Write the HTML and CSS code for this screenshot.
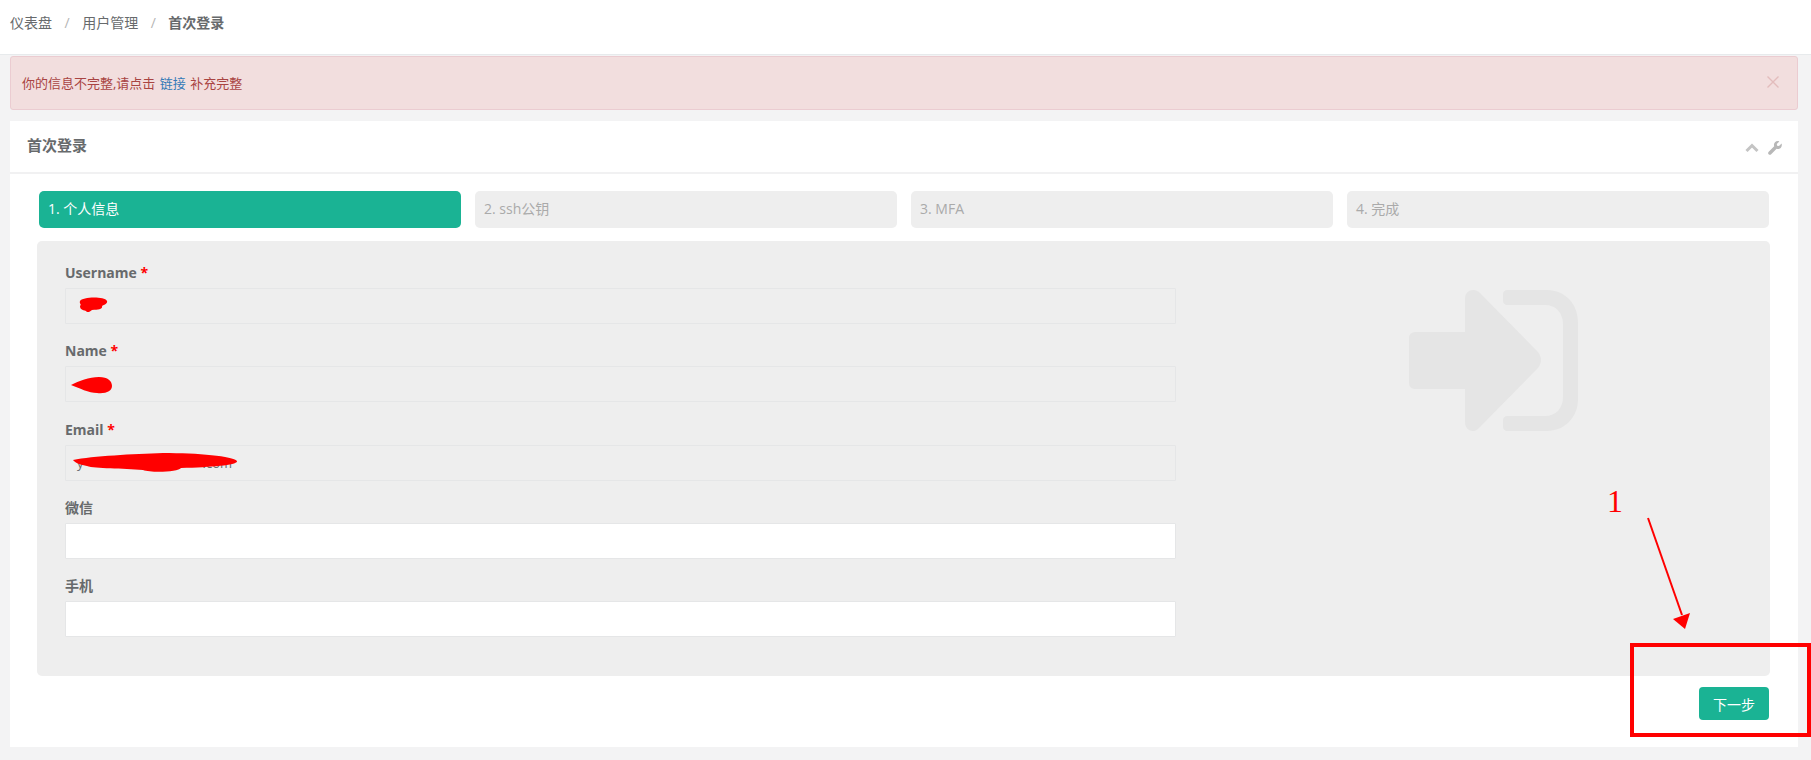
FILE: index.html
```html
<!DOCTYPE html>
<html lang="zh-CN">
<head>
<meta charset="utf-8">
<title>首次登录</title>
<link rel="stylesheet" href="styles.css">
</head>
<body>
<header class="topbar">
  <nav class="crumbs">
    <span>仪表盘</span><span class="sep">/</span><span>用户管理</span><span class="sep">/</span><strong>首次登录</strong>
  </nav>
</header>
<main class="page">
  <div class="alert">
    <span>你的信息不完整,请点击 <a class="alert-link" href="#">链接</a> 补充完整</span>
    <svg class="alert-close" viewBox="0 0 12 12" width="12" height="12"><path d="M0.5 0.5L11.5 11.5M11.5 0.5L0.5 11.5"/></svg>
  </div>
  <section class="card">
    <div class="card-title">
      <h5>首次登录</h5>
      <div class="card-tools">
        <svg class="tool" viewBox="0 0 14 10" width="14" height="10"><path d="M1.5 8L7 2.5L12.5 8"/></svg>
        <svg class="wrench" viewBox="0 0 14 14" width="14" height="14"><path d="M13.6 2.6L11 5.1L9.1 4.7L8.8 2.9L11.3 0.4C9.8-.2 8.1 0.1 7 1.2C5.900 2.300 5.700 3.900 6.200 5.200L0.700 10.700C-.1 11.500-.1 12.600 0.600 13.300C1.300 14 2.500 14 3.200 13.200L8.600 7.800C9.900 8.300 11.600 8 12.700 7C13.800 5.800 14.100 4.100 13.600 2.600Z"/></svg>
      </div>
    </div>
    <div class="card-body">
      <ol class="steps">
        <li class="step active">1. 个人信息</li>
        <li class="step">2. ssh公钥</li>
        <li class="step">3. MFA</li>
        <li class="step">4. 完成</li>
      </ol>
      <div class="panel">
        <form class="form">
          <div class="field">
            <label>Username <em>*</em></label>
            <div class="input disabled">
              <svg class="scribble s1" viewBox="0 0 30 16" width="30" height="16"><path d="M2 4C4 0 26-1 29 4C30 7 25 8 24 9C25 12 21 13 14 13C12 15 9 16 8 14C4 13 2 12 2 9C4 7 1 7 2 4Z"/></svg>
            </div>
          </div>
          <div class="field">
            <label>Name <em>*</em></label>
            <div class="input disabled">
              <svg class="scribble s2" viewBox="0 0 42 17" width="42" height="17"><path d="M0 8C8 4 18 0 28 0C37 0 41 4 41 9C41 14 35 17 26 16C18 16 8 11 0 8Z"/></svg>
            </div>
          </div>
          <div class="field">
            <label>Email <em>*</em></label>
            <div class="input disabled">
              <span class="email-value">y******@*********.com</span>
              <svg class="scribble s3" viewBox="0 0 164 20" width="164" height="20"><path d="M0 7C20 3 60 1 90 0C125 0 160 3 164 8C165 12 140 14 108 15C106 19 78 20 70 17C50 15 22 16 14 13C8 12 2 10 0 7Z"/></svg>
            </div>
          </div>
          <div class="field">
            <label>微信</label>
            <div class="input"></div>
          </div>
          <div class="field">
            <label>手机</label>
            <div class="input"></div>
          </div>
        </form>
        <div class="watermark">
          <svg viewBox="0 0 169 141" width="169" height="141">
            <path d="M0 48C0 44 3 42 7 42H56V9C56 3 60 0 64 0C67 0 69 1 71 3L129 62C133 67 133 73 129 78L71 137C69 139 67 141 64 141C60 141 56 138 56 132V99H7C3 99 0 97 0 93Z"/>
            <path d="M98 0H138C156 0 169 14 169 32V109C169 127 156 141 138 141H98C96 141 94 139 94 137V130C94 128 96 126 98 126H136C147 126 154 118 154 107V34C154 23 147 15 136 15H98C96 15 94 13 94 11V4C94 2 96 0 98 0Z"/>
          </svg>
        </div>
      </div>
      <div class="actions">
        <button class="btn" type="button">下一步</button>
      </div>
    </div>
  </section>
</main>
<svg class="annotation" viewBox="0 0 1811 760" width="1811" height="760">
  <text class="anno-num" x="1607" y="512">1</text>
  <path class="anno-line" d="M1648 518L1682 615"/>
  <path class="anno-head" d="M1673 619L1690 613L1685 629Z"/>
  <rect class="anno-box" x="1632" y="645" width="177" height="90"/>
</svg>
</body>
</html>
```
FILE: styles.css
```css
* {
  box-sizing: border-box;
}

html,
body {
  margin: 0;
  height: 760px;
  overflow: hidden;
}

body {
  position: relative;
  background: #f3f3f4;
  color: #676a6c;
  font-family: "Open Sans", "Noto Sans CJK SC", sans-serif;
  font-size: 14px;
}

.topbar {
  height: 55px;
  background: #fff;
  border-bottom: 1px solid #e7eaec;
  padding: 0 10px;
  display: flex;
  align-items: center;
}

.crumbs {
  display: flex;
  align-items: center;
  margin-top: -9px;
  line-height: 20px;
}

.crumbs strong {
  font-weight: 700;
}

.sep {
  color: #b5b5b5;
  margin: 0 12.5px;
}

.page {
  padding: 1px 13px 0 10px;
}

.alert {
  height: 54px;
  background: #f2dede;
  border: 1px solid #ebccd1;
  border-radius: 3px;
  color: #a94442;
  font-size: 13px;
  word-spacing: 1px;
  padding: 0 12px 2px 11px;
  display: flex;
  align-items: center;
  justify-content: space-between;
}

.alert-link {
  color: #337ab7;
  text-decoration: none;
}

.alert-close {
  fill: none;
  stroke: #e3bcbc;
  stroke-width: 1.4;
  margin-right: 6px;
  flex: none;
}

.card {
  margin-top: 11px;
  background: #fff;
  height: 626px;
}

.card-title {
  height: 53px;
  border-bottom: 2px solid #f1f1f2;
  padding: 0 16px 4px 17px;
  display: flex;
  align-items: center;
  justify-content: space-between;
}

.card-title h5 {
  margin: 0;
  font-size: 15px;
  font-weight: 700;
  line-height: 20px;
}

.card-tools {
  display: flex;
  align-items: center;
  gap: 9px;
  margin-top: 6px;
}

.tool {
  fill: none;
  stroke: #c4c4c4;
  stroke-width: 3;
}

.wrench {
  fill: #b8b8b8;
}

.card-body {
  padding: 17px 28px 0 27px;
}

.steps {
  list-style: none;
  margin: 0;
  padding: 0 1px 0 2px;
  display: grid;
  grid-template-columns: repeat(4, 1fr);
  gap: 14px;
}

.step {
  height: 37px;
  border-radius: 5px;
  background: #eee;
  color: #aaa;
  padding: 0 9px 3px;
  display: flex;
  align-items: center;
}

.step.active {
  background: #1ab394;
  color: #fff;
}

.panel {
  margin-top: 13px;
  height: 435px;
  background: #eee;
  border-radius: 5px;
  display: flex;
}

.form {
  width: 1139px;
  padding: 21px 0 0 28px;
  flex: none;
}

.field {
  padding-bottom: 16.25px;
}

.field label {
  display: block;
  height: 26px;
  padding-top: 1px;
  font-weight: 700;
  line-height: 20px;
  color: #676a6c;
}

.field em {
  color: #f00;
  font-style: normal;
}

.input {
  position: relative;
  height: 36px;
  width: 1111px;
  background: #fff;
  border: 1px solid #e5e6e7;
  border-radius: 1px;
}

.input.disabled {
  background: #eee;
}

.email-value {
  position: absolute;
  left: 11px;
  top: 7px;
  font-size: 13px;
  color: #676a6c;
  line-height: 20px;
}

.scribble {
  position: absolute;
  fill: #f00;
}

.s1 {
  left: 12px;
  top: 8px;
}

.s2 {
  left: 5px;
  top: 10px;
}

.s3 {
  left: 7px;
  top: 7px;
}

.watermark {
  flex: 1;
  padding: 49px 0 0 233px;
}

.watermark svg {
  display: block;
  fill: #e5e5e5;
}

.actions {
  display: flex;
  justify-content: flex-end;
  margin-top: 11px;
  padding-right: 1px;
}

.btn {
  width: 70px;
  height: 33px;
  border: 0;
  border-radius: 4px;
  background: #1ab394;
  color: #fff;
  font: inherit;
  padding: 0;
}

.annotation {
  position: absolute;
  left: 0;
  top: 0;
  pointer-events: none;
}

.anno-num {
  font-family: "Liberation Serif", serif;
  font-size: 32px;
  fill: #f00;
}

.anno-line {
  stroke: #f00;
  stroke-width: 2;
  fill: none;
}

.anno-head {
  fill: #f00;
}

.anno-box {
  fill: none;
  stroke: #f00;
  stroke-width: 4;
}
```
